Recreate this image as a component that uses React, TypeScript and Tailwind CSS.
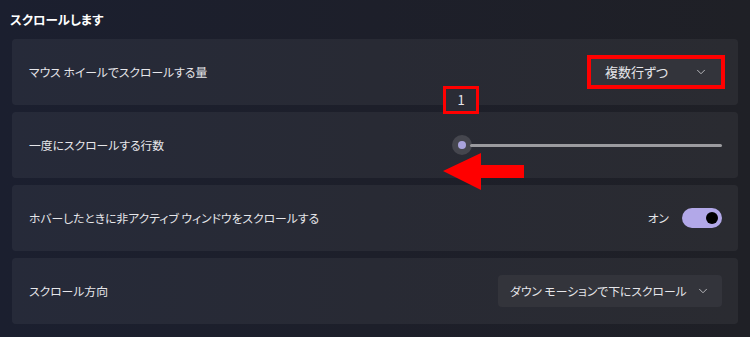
import { ChevronDown } from "lucide-react";

const font = {
  fontFamily: '"Noto Sans CJK JP", "Noto Sans", sans-serif',
};

function Chevron() {
  return <ChevronDown className="h-3.5 w-3.5 shrink-0 text-[#c8c8cc]" strokeWidth={1.5} />;
}

function Card({ children }: { children: React.ReactNode }) {
  return (
    <div className="flex h-[66px] items-center justify-between whitespace-nowrap rounded-[4px] bg-gradient-to-r from-[#262a39] via-[#282a34] to-[#2a2b31] pl-[17px] pr-[16px] text-[11.8px] text-[#e6e6ea] [font-feature-settings:'palt']">
      {children}
    </div>
  );
}

export default function App() {
  return (
    <div
      style={font}
      className="relative h-[337px] w-[750px] overflow-hidden bg-gradient-to-r from-[#1b1f2f] via-[#1d1f2a] to-[#1f2026]"
    >
      <h2 className="pl-[10px] pt-[10px] text-[12.5px] font-bold leading-[20px] text-white [font-feature-settings:'palt']">
        スクロールします
      </h2>
      <div className="mt-[9px] flex flex-col gap-[7px] pl-[12px] pr-[12px]">
        <Card>
          <span>マウス ホイールでスクロールする量</span>
          <div className="-mr-[3px] flex h-[34px] w-[138px] items-center justify-between border-[4px] border-[#ff0000] bg-[#33343b] pl-[14px] pr-[13px] text-[13px]">
            <span>複数行ずつ</span>
            <Chevron />
          </div>
        </Card>
        <Card>
          <span>一度にスクロールする行数</span>
          <div className="flex w-[270px] items-center">
            <div className="flex h-[20px] w-[20px] items-center justify-center rounded-full bg-[#45464e]">
              <div className="h-[8px] w-[8px] rounded-full bg-[#a9a3dd]" />
            </div>
            <div className="-ml-[2px] h-[3px] flex-1 rounded-full bg-[#9b9b9f]" />
          </div>
        </Card>
        <Card>
          <span>ホバーしたときに非アクティブ ウィンドウをスクロールする</span>
          <div className="flex items-center gap-[13px]">
            <span>オン</span>
            <div className="flex h-[20px] w-[40px] items-center justify-end rounded-full bg-[#b2a8e8] pr-[4px]">
              <div className="h-[12px] w-[12px] rounded-full bg-black" />
            </div>
          </div>
        </Card>
        <Card>
          <span>スクロール方向</span>
          <div className="flex h-[32px] w-[224px] items-center justify-between rounded-[4px] bg-[#33343b] pl-[12px] pr-[12px]">
            <span>ダウン モーションで下にスクロール</span>
            <Chevron />
          </div>
        </Card>
      </div>

      <div className="absolute left-[443px] top-[86px] flex h-[28px] w-[36px] items-center justify-center border-[3px] border-[#ff0000] bg-[#2a2c35] text-[13px] text-[#e6e6ea]">
        1
      </div>

      <svg className="absolute left-[442px] top-[152px]" width="84" height="40" viewBox="0 0 84 40">
        <polygon points="1,19 39,1 39,13 82,13 82,26 39,26 39,38" fill="#ff0000" />
      </svg>
    </div>
  );
}
